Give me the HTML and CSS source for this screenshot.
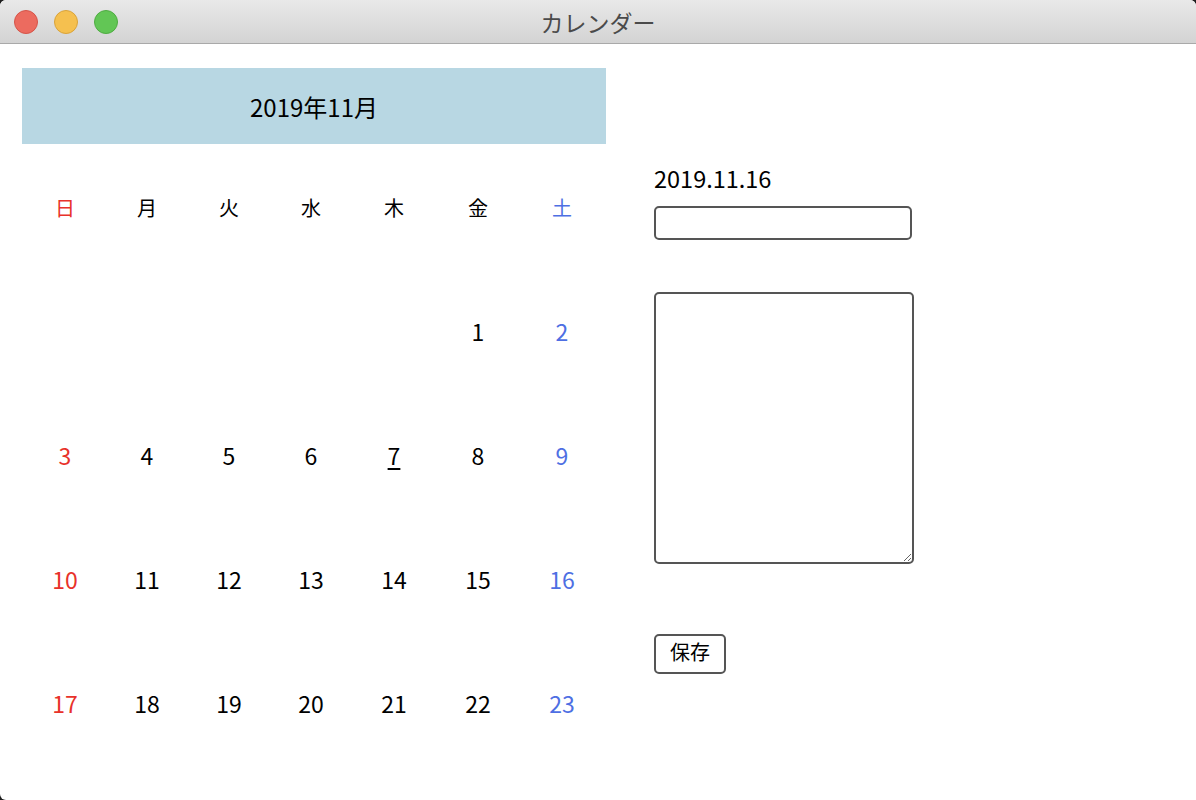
FILE: index.html
```html
<!DOCTYPE html>
<html lang="ja">
<head>
<meta charset="utf-8">
<title>カレンダー</title>
<link rel="stylesheet" href="styles.css">
</head>
<body>
<div class="window">
  <div class="titlebar">
    <div class="lights">
      <span class="light red"></span>
      <span class="light yellow"></span>
      <span class="light green"></span>
    </div>
    <div class="title">カレンダー</div>
  </div>
  <div class="content">
    <div class="calendar">
      <div class="cal-header">2019年11月</div>
      <div class="cal-grid">
        <div class="cell wd sun">日</div>
        <div class="cell wd">月</div>
        <div class="cell wd">火</div>
        <div class="cell wd">水</div>
        <div class="cell wd">木</div>
        <div class="cell wd">金</div>
        <div class="cell wd sat">土</div>

        <div class="cell"></div>
        <div class="cell"></div>
        <div class="cell"></div>
        <div class="cell"></div>
        <div class="cell"></div>
        <div class="cell">1</div>
        <div class="cell sat">2</div>

        <div class="cell sun">3</div>
        <div class="cell">4</div>
        <div class="cell">5</div>
        <div class="cell">6</div>
        <div class="cell today">7</div>
        <div class="cell">8</div>
        <div class="cell sat">9</div>

        <div class="cell sun">10</div>
        <div class="cell">11</div>
        <div class="cell">12</div>
        <div class="cell">13</div>
        <div class="cell">14</div>
        <div class="cell">15</div>
        <div class="cell sat">16</div>

        <div class="cell sun">17</div>
        <div class="cell">18</div>
        <div class="cell">19</div>
        <div class="cell">20</div>
        <div class="cell">21</div>
        <div class="cell">22</div>
        <div class="cell sat">23</div>
      </div>
    </div>
    <div class="panel">
      <div class="date-label">2019.11.16</div>
      <input class="title-input" type="text">
      <textarea class="memo"></textarea>
      <button class="save">保存</button>
    </div>
  </div>
</div>
</body>
</html>
```

FILE: styles.css
```css
* { box-sizing: border-box; }
html, body {
  margin: 0;
  padding: 0;
  background: #1e1e1e;
  width: 1196px;
  height: 800px;
  overflow: hidden;
}
body {
  font-family: "Noto Sans CJK JP", "Noto Sans", sans-serif;
  color: #000;
}
.window {
  width: 1196px;
  height: 800px;
  background: #fff;
  border-radius: 6px 6px 0 6px;
  overflow: hidden;
  display: flex;
  flex-direction: column;
}
.titlebar {
  height: 44px;
  flex: none;
  display: flex;
  align-items: center;
  position: relative;
  background: linear-gradient(#e9e9e9, #d3d3d3);
  border-bottom: 1px solid #a9a9a9;
}
.lights {
  display: flex;
  gap: 16px;
  padding-left: 14px;
}
.light {
  width: 24px;
  height: 24px;
  border-radius: 50%;
  display: block;
}
.red { background: #ec6b5f; border: 1px solid #d55449; }
.yellow { background: #f5c04f; border: 1px solid #d9a33a; }
.green { background: #62c655; border: 1px solid #4fac42; }
.title {
  position: absolute;
  left: 0;
  right: 0;
  top: 0;
  bottom: 0;
  display: flex;
  align-items: center;
  justify-content: center;
  font-size: 23px;
  color: #4a4a4a;
  pointer-events: none;
}
.content {
  display: flex;
  padding: 24px 22px 0;
}
.calendar {
  width: 584px;
  flex: none;
}
.cal-header {
  height: 76px;
  background: #b8d7e3;
  display: flex;
  align-items: center;
  justify-content: center;
  font-size: 24px;
  margin-bottom: 1px;
}
.cal-grid {
  display: grid;
  grid-template-columns: 86px 78px 86px 78px 88px 80px 88px;
  grid-auto-rows: 124px;
}
.cell {
  display: flex;
  align-items: center;
  justify-content: center;
  font-size: 23px;
}
.cell.wd { font-size: 20px; }
.sun { color: #e8322a; }
.sat { color: #4e6fe3; }
.today { text-decoration: underline; text-decoration-thickness: 2px; text-underline-offset: 3px; }
.panel {
  margin-left: 48px;
  padding-top: 95px;
  display: flex;
  flex-direction: column;
  align-items: flex-start;
}
.date-label {
  font-size: 23.5px;
  line-height: 30px;
}
.title-input {
  margin-top: 13px;
  width: 258px;
  height: 34px;
  border: 2px solid #555;
  border-radius: 5px;
  font-family: inherit;
  font-size: 16px;
  background: #fff;
}
.memo {
  margin-top: 52px;
  width: 260px;
  height: 272px;
  border: 2px solid #555;
  border-radius: 5px;
  font-family: inherit;
  font-size: 16px;
  background: #fff;
}
.save {
  margin-top: 70px;
  width: 72px;
  height: 40px;
  border: 2px solid #555;
  border-radius: 5px;
  background: #fff;
  font-family: inherit;
  font-size: 20px;
  line-height: 1;
  color: #000;
  padding: 0 0 4px;
}
```
